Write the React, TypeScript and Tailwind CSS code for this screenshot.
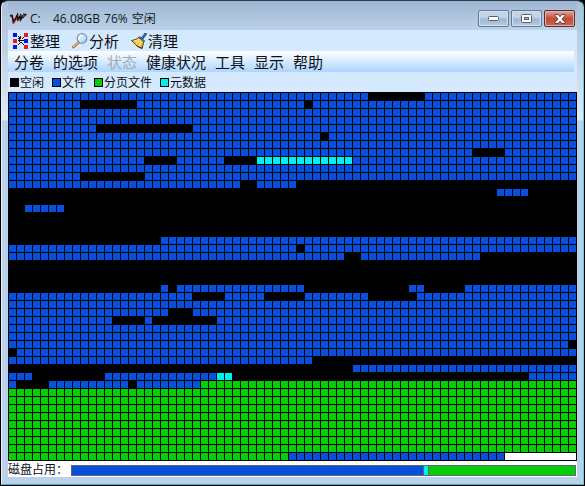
import { clsx } from 'clsx';
import type { ReactNode } from 'react';

type BlockKind = 'free' | 'file' | 'page' | 'meta' | 'none';

// [kind, first column, column after the last]
type Run = [BlockKind, number, number];

const COLS = 71;
const ROWS = 46;
const CELL = 8;

const FILL: Record<BlockKind, string> = {
  free: '#000000',
  file: '#0850dc',
  page: '#08cc08',
  meta: '#00f0f0',
  none: '#ffffff',
};

// Rows that are neither listed here nor in the page file area are full of files.
const DISK_ROWS: Record<number, Run[]> = {
  0: [['free', 45, 52]],
  1: [['free', 9, 16], ['free', 37, 38]],
  4: [['free', 11, 23]],
  5: [['free', 39, 40]],
  7: [['free', 58, 62]],
  8: [['free', 17, 21], ['free', 27, 31], ['meta', 31, 43]],
  10: [['free', 9, 17]],
  11: [['free', 29, 31], ['free', 36, 71]],
  12: [['free', 0, 61], ['free', 65, 71]],
  13: [['free', 0, 71]],
  14: [['free', 0, 2], ['free', 7, 71]],
  15: [['free', 0, 71]],
  16: [['free', 0, 71]],
  17: [['free', 0, 71]],
  18: [['free', 0, 19]],
  19: [['free', 36, 37]],
  20: [['free', 42, 44], ['free', 59, 71]],
  21: [['free', 0, 71]],
  22: [['free', 0, 71]],
  23: [['free', 0, 71]],
  24: [['free', 0, 19], ['free', 20, 21], ['free', 37, 50], ['free', 52, 57]],
  25: [['free', 23, 27], ['free', 32, 37], ['free', 45, 51]],
  27: [['free', 20, 23]],
  28: [['free', 13, 17], ['free', 18, 26]],
  31: [['free', 70, 71]],
  32: [['free', 0, 1]],
  33: [['free', 38, 71]],
  34: [['free', 0, 43]],
  35: [['free', 3, 12], ['meta', 26, 28], ['free', 28, 65]],
  36: [['free', 1, 5], ['free', 15, 16], ['page', 24, 71]],
  45: [['page', 0, 35], ['none', 62, 71]],
};

const MENU = ['分卷', '的选项', '状态', '健康状况', '工具', '显示', '帮助'];

const LEGEND = [
  { label: '空闲', color: 'bg-black' },
  { label: '文件', color: 'bg-[#0850dc]' },
  { label: '分页文件', color: 'bg-[#08cc08]' },
  { label: '元数据', color: 'bg-[#00f0f0]' },
];

const USAGE = [
  { kind: 'file', share: 352, color: 'bg-[#0850dc]' },
  { kind: 'meta', share: 4, color: 'bg-[#00f0f0]' },
  { kind: 'page', share: 147, color: 'bg-[#08cc08]' },
];

function AppLogo() {
  return (
    <svg width="18" height="16" viewBox="0 0 18 16" fill="none" aria-hidden="true">
      <path d="M1 5.500l2-1 1 7 4-7 .5 5 3-4.500 1 3 3-4.500" stroke="#e02020" strokeWidth="1.200" />
      <path d="M1 4.500h2l1.500 6M5 11l3.500-7 .5 4M8 9l3-3.500.5 3 2-4.500" stroke="#141418" strokeWidth="1.600" />
      <path d="M11 3l1 1M14 3l3 .5-2 2M13 7l2-1" stroke="#141418" strokeWidth="1.200" />
      <path d="M4 12.500l2-2M9 9.500l1.500-1" stroke="#c01818" strokeWidth="1.400" />
    </svg>
  );
}

function DefragIcon() {
  return (
    <svg width="16" height="16" viewBox="0 0 16 16" shapeRendering="crispEdges" aria-hidden="true">
      <path d="M0 0h4v4H0zM11 6h4v4h-4zM0 12h4v4H0z" fill="#1010e0" />
      <path d="M11 0h4v4h-4zM0 6h4v4H0zM11 12h4v4h-4z" fill="#f01818" />
      <path
        d="M5 3h1v1h1v1h1v1H7V5H6V4H5zM9 5h1V4h1v1h-1v1H9zM5 7h1V6h1v1h4v1H7v1H6V8H5zM8 9h1v1h1v1h1v1h-1v-1H9v-1H8zM7 9h1v1H7v1H6v1H5v-1h1v-1h1zM5 5h3v1H5zM7 3h1v3H7z"
        fill="#101010"
      />
    </svg>
  );
}

function MagnifierIcon() {
  return (
    <svg width="16" height="16" viewBox="0 0 16 16" fill="none" aria-hidden="true">
      <path d="M6.500 9.500L1.500 14" stroke="#b9783f" strokeWidth="3" strokeLinecap="round" />
      <path d="M6 9.500L1.500 13.500" stroke="#f2bd84" strokeWidth="1.200" strokeLinecap="round" />
      <circle cx="10" cy="5.500" r="4.800" fill="#c4e8fa" stroke="#7795ae" strokeWidth="1.300" />
      <path d="M7 6a3 3 0 0 1 3-3.500" stroke="#fff" strokeWidth="1.600" strokeLinecap="round" />
      <path d="M10 9a3.500 3.500 0 0 0 3.400-3" stroke="#86c4ea" strokeWidth="1.200" />
    </svg>
  );
}

function BroomIcon() {
  return (
    <svg width="16" height="16" viewBox="0 0 16 16" fill="none" aria-hidden="true">
      <path d="M11 5.500L14.500 1" stroke="#1f4268" strokeWidth="2.600" strokeLinecap="round" />
      <path d="M11 5L14.300 1" stroke="#5d95c9" strokeWidth="1" strokeLinecap="round" />
      <path d="M8 4l5 4-2 7.500-5-2.500-5.500-5.500C4 7 6.500 6 8 4z" fill="#eebd3d" stroke="#5b4416" />
      <path d="M8.500 6.500L3 8M9.500 7.500l-5 3M10.500 8.500l-3 4.500" stroke="#fff0a0" />
      <path d="M8.500 3.500l5 4-.5 1.500L8 5z" fill="#4b80b4" stroke="#1f4268" strokeWidth=".6" />
      <path d="M6 13l5 2.500.5-2.500" stroke="#4a3510" />
    </svg>
  );
}

function CaptionButton({
  label,
  danger,
  children,
}: {
  label: string;
  danger?: boolean;
  children: ReactNode;
}) {
  return (
    <button
      type="button"
      aria-label={label}
      className={clsx(
        'flex h-[17px] w-[31px] items-center justify-center rounded-[2px] border',
        danger
          ? 'border-[#5d2b35] bg-linear-to-b from-[#e0a59b] from-0% via-[#c44a34] via-50% to-[#c96452] shadow-[inset_0_0_0_1px_#e5aea6]'
          : 'border-[#66788f] bg-linear-to-b from-[#c3d4e8] from-40% via-[#9fb7d2] via-55% to-[#b5cbe3] shadow-[inset_0_0_0_1px_#d3e1f0]'
      )}>
      {children}
    </button>
  );
}

function TitleBar() {
  return (
    <header className="flex h-[29px] items-start justify-between bg-linear-to-b from-[#9fb6d3] to-[#bcd2ea] pr-[2px] pl-px">
      <div className="flex h-9 items-center gap-[3px] text-[12px] text-[#101820]">
        <AppLogo />
        <h1 className="flex gap-1 whitespace-nowrap">
          <span className="w-[19px]">C:</span>
          <span>46.08GB</span>
          <span>76%</span>
          <span>空闲</span>
        </h1>
      </div>
      <div className="flex gap-[2px] pt-[9px]">
        <CaptionButton label="最小化">
          <svg width="11" height="5" viewBox="0 0 11 5" aria-hidden="true">
            <rect x=".5" y=".5" width="10" height="4" rx="1" fill="#fff" stroke="#566273" />
          </svg>
        </CaptionButton>
        <CaptionButton label="最大化">
          <svg width="11" height="9" viewBox="0 0 11 9" aria-hidden="true">
            <rect x=".5" y=".5" width="10" height="8" rx="1" fill="#fff" stroke="#566273" />
            <rect x="3.500" y="3.500" width="4" height="2" fill="#9fb7d2" stroke="#566273" />
          </svg>
        </CaptionButton>
        <CaptionButton label="关闭" danger>
          <svg width="12" height="10" viewBox="0 0 12 10" aria-hidden="true">
            <path
              d="M1 .5h3l2 2.200L8 .5h3v1L8 5l3 3.500v1H8L6 7.300 4 9.500H1v-1L4 5 1 1.500z"
              fill="#fff"
              stroke="#5a4650"
            />
          </svg>
        </CaptionButton>
      </div>
    </header>
  );
}

function ToolButton({ icon, label }: { icon: ReactNode; label: string }) {
  return (
    <button type="button" className="flex items-center gap-px">
      {icon}
      {label}
    </button>
  );
}

function DiskMap() {
  const width = COLS * CELL + 1;
  const height = ROWS * CELL + 1;
  const runs: ReactNode[] = [];

  for (let row = 0; row < ROWS; row++) {
    const base: BlockKind = row > 36 && row < 45 ? 'page' : 'file';
    const rowRuns: Run[] = [[base, 0, COLS], ...(DISK_ROWS[row] ?? [])];
    rowRuns.forEach(([kind, from, to]) => {
      if (kind === 'none') {
        return;
      }
      runs.push(
        <rect
          key={`${row}-${kind}-${from}`}
          x={from * CELL}
          y={row * CELL}
          width={(to - from) * CELL}
          height={CELL}
          fill={FILL[kind]}
        />
      );
    });
  }

  const columnLines = Array.from({ length: COLS + 1 }, (_, i) => `M${i * CELL} 0h1v${height}h-1z`);
  const rowLines = Array.from({ length: ROWS + 1 }, (_, i) => `M0 ${i * CELL}h${width}v1H0z`);

  return (
    <svg
      role="img"
      aria-label="磁盘占用"
      viewBox={`0 0 ${width} ${height}`}
      shapeRendering="crispEdges"
      className="block w-full">
      {runs}
      <path d={[...columnLines, ...rowLines].join('')} fill="#000" />
      {/* unallocated tail, drawn without cells */}
      <rect x={62 * CELL + 1} y={45 * CELL + 1} width={9 * CELL - 1} height={7} fill={FILL.none} />
    </svg>
  );
}

export default function App() {
  return (
    <div className="bg-black px-px pb-px font-['Open_Sans','Noto_Sans_CJK_SC',sans-serif]">
      <div className="overflow-hidden rounded-t-[7px] border border-t-[#303c48] border-r-[#58d0e4] border-b-[#40b0b8] border-l-[#e8f2fc] bg-linear-to-b from-[#a9bfda] from-0% via-[#e0eaf7] via-[119px] to-[#b9d1ea] to-[120px] px-[6px] pb-[7px]">
        <TitleBar />
        <main className="bg-[#d5e9fe] text-[#0c1018]">
          <div className="flex h-[21px] items-center gap-3 pl-[5px] text-[15px] leading-5 whitespace-nowrap">
            <ToolButton icon={<DefragIcon />} label="整理" />
            <ToolButton icon={<MagnifierIcon />} label="分析" />
            <ToolButton icon={<BroomIcon />} label="清理" />
          </div>
          <nav className="mr-[3px] flex h-[21px] items-center gap-[9px] bg-linear-to-b from-white to-[#acd5ff] pl-[6px] text-[15px] leading-5 whitespace-nowrap">
            {MENU.map((item) => (
              <button
                key={item}
                type="button"
                disabled={item === '状态'}
                className="disabled:text-[#a4acb6]">
                {item}
              </button>
            ))}
          </nav>
          <ul className="flex h-5 items-center gap-2 pt-px pl-[2px] text-[12px] leading-4 whitespace-nowrap">
            {LEGEND.map(({ label, color }) => (
              <li key={label} className="flex items-center gap-px">
                <span className={clsx('size-[9px] border border-black', color)} />
                {label}
              </li>
            ))}
          </ul>
          <DiskMap />
          <footer className="flex h-4 items-center bg-white pt-[2px] pr-px text-[12px] leading-4">
            <span className="w-[63px] shrink-0 whitespace-nowrap">磁盘占用：</span>
            <div className="flex h-[11px] grow gap-px border border-[#586878] bg-[#586878]">
              {USAGE.map(({ kind, share, color }) => (
                <div key={kind} className={color} style={{ flex: share }} />
              ))}
            </div>
          </footer>
        </main>
      </div>
    </div>
  );
}
